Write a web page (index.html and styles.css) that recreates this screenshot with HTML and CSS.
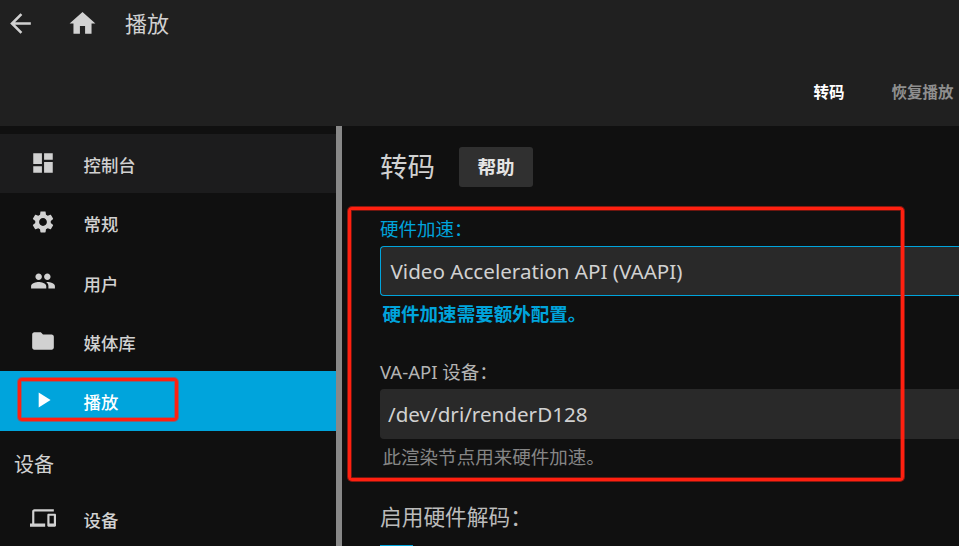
FILE: index.html
```html
<!DOCTYPE html>
<html lang="zh-CN">
<head>
<meta charset="utf-8">
<title>播放</title>
<link rel="stylesheet" href="styles.css">
</head>
<body>
<header class="header">
  <div class="header-top">
    <svg class="icon-top" viewBox="0 0 24 24"><path d="M20 11H7.83l5.59-5.59L12 4l-8 8 8 8 1.41-1.41L7.83 13H20v-2z"/></svg>
    <svg class="icon-top icon-home" viewBox="0 0 24 24"><path d="M10 20v-6h4v6h5v-8h3L12 3 2 12h3v8z"/></svg>
    <h1 class="page-title">播放</h1>
  </div>
  <nav class="tabs"><a class="tab tab-active">转码</a><a class="tab">恢复播放</a></nav>
</header>
<div class="body">
  <aside class="sidebar">
    <a class="nav-item nav-hover"><svg class="nav-icon" viewBox="0 0 24 24"><path d="M3 13h8V3H3v10zm0 8h8v-6H3v6zm10 0h8V11h-8v10zm0-18v6h8V3h-8z"/></svg><span class="nav-text">控制台</span></a>
    <a class="nav-item"><svg class="nav-icon" viewBox="0 0 24 24"><path d="M19.14 12.94c.04-.3.06-.61.06-.94 0-.32-.02-.64-.07-.94l2.03-1.58c.18-.14.23-.41.12-.61l-1.92-3.32c-.12-.22-.37-.29-.59-.22l-2.39.96c-.5-.38-1.03-.7-1.62-.94l-.36-2.54c-.04-.24-.24-.41-.48-.41h-3.84c-.24 0-.43.17-.47.41l-.36 2.54c-.59.24-1.13.57-1.62.94l-2.39-.96c-.22-.08-.47 0-.59.22L2.74 8.87c-.12.21-.08.47.12.61l2.03 1.58c-.05.3-.09.63-.09.94s.02.64.07.94l-2.03 1.58c-.18.14-.23.41-.12.61l1.92 3.32c.12.22.37.29.59.22l2.39-.96c.5.38 1.03.7 1.62.94l.36 2.54c.05.24.24.41.48.41h3.84c.24 0 .44-.17.47-.41l.36-2.54c.59-.24 1.13-.56 1.62-.94l2.39.96c.22.08.47 0 .59-.22l1.92-3.32c.12-.22.07-.47-.12-.61l-2.01-1.58zM12 15.6c-1.98 0-3.6-1.62-3.6-3.6s1.62-3.6 3.6-3.6 3.6 1.62 3.6 3.6-1.62 3.6-3.6 3.6z"/></svg><span class="nav-text">常规</span></a>
    <a class="nav-item"><svg class="nav-icon" viewBox="0 0 24 24"><path d="M16 11c1.66 0 2.99-1.34 2.99-3S17.66 5 16 5s-3 1.34-3 3 1.34 3 3 3zm-8 0c1.66 0 2.99-1.34 2.99-3S9.66 5 8 5 5 6.34 5 8s1.34 3 3 3zm0 2c-2.33 0-7 1.17-7 3.5V19h14v-2.5c0-2.33-4.67-3.5-7-3.5zm8 0c-.29 0-.62.02-.97.05 1.16.84 1.97 1.97 1.97 3.45V19h6v-2.5c0-2.33-4.67-3.5-7-3.5z"/></svg><span class="nav-text">用户</span></a>
    <a class="nav-item"><svg class="nav-icon" viewBox="0 0 24 24"><path d="M10 4H4c-1.1 0-1.99.9-1.99 2L2 18c0 1.100.9 2 2 2h16c1.100 0 2-.9 2-2V8c0-1.100-.9-2-2-2h-8l-2-2z"/></svg><span class="nav-text">媒体库</span></a>
    <a class="nav-item nav-active"><svg class="nav-icon" viewBox="0 0 24 24"><path d="M8 5v14l11-7z"/></svg><span class="nav-text">播放</span><i class="mark mark-nav"></i></a>
    <h3 class="nav-heading">设备</h3>
    <a class="nav-item nav-last"><svg class="nav-icon" viewBox="0 0 24 24"><path d="M4 6h18V4H4c-1.100 0-2 .9-2 2v11H0v3h14v-3H4V6zm19 2h-6c-.55 0-1 .45-1 1v10c0 .55.45 1 1 1h6c.55 0 1-.45 1-1V9c0-.55-.45-1-1-1zm-1 9h-4v-7h4v7z"/></svg><span class="nav-text">设备</span></a>
  </aside>
  <div class="scrollbar"></div>
  <main class="content">
    <div class="section-head"><h2 class="section-title">转码</h2><button class="help">帮助</button></div>
    <div class="marked">
      <div class="label label-focus">硬件加速：</div>
      <div class="field field-focus">Video Acceleration API (VAAPI)</div>
      <div class="desc desc-link">硬件加速需要额外配置。</div>
      <div class="label label-device">VA-API 设备：</div>
      <div class="field field-input">/dev/dri/renderD128</div>
      <div class="desc">此渲染节点用来硬件加速。</div>
      <i class="mark mark-fields"></i>
    </div>
    <h3 class="decode-title">启用硬件解码：</h3>
    <div class="checkbox"></div>
  </main>
</div>
</body>
</html>
```
FILE: styles.css
```css
* { box-sizing: border-box; }
body {
  margin: 0;
  width: 959px;
  height: 546px;
  overflow: hidden;
  background: #101010;
  color: #d1d1d1;
  font-family: "Noto Sans", "Noto Sans CJK SC", sans-serif;
}
h1, h2, h3 { margin: 0; font-weight: 400; }
svg { fill: currentColor; flex: none; }

.header { height: 126px; background: #202020; }
.header-top { height: 46px; padding-left: 5px; display: flex; align-items: center; }
.icon-top { width: 31px; height: 31px; }
.icon-home { margin-left: 31px; }
.page-title { margin-left: 27px; font-size: 22px; line-height: 30px; }
.tabs { display: flex; justify-content: flex-end; gap: 47px; padding: 34px 5.500px 0 0; }
.tab { font-size: 15.500px; line-height: 24px; font-weight: 700; color: #8f8f8f; }
.tab-active { color: #fff; }

.body { display: flex; height: 420px; overflow: hidden; }
.sidebar { width: 336px; padding-top: 8px; flex: none; }
.nav-item {
  position: relative;
  height: 59.300px;
  padding: 5px 0 0 30px;
  display: flex;
  align-items: center;
  gap: 27.500px;
  font-size: 17.400px;
  font-weight: 500;
  line-height: 26px;
}
.nav-icon { width: 26px; height: 26px; margin-top: -7px; }
.nav-text { margin-bottom: 2px; }
.nav-hover { background: #1c1c1d; }
.nav-active { height: 59.800px; padding-top: 3px; background: #00a4dc; color: #fff; }
.nav-active .nav-icon { margin-top: -5px; }
.nav-heading { height: 58.500px; padding: 20px 0 0 14px; font-size: 20px; line-height: 28px; }
.nav-last { height: 56px; padding-top: 7px; }
.nav-last .nav-icon { margin-top: -5px; }
.scrollbar { width: 6px; background: #888; flex: none; }

.content { flex: none; width: 617px; padding: 21px 0 0 38px; }
.section-head { display: flex; align-items: center; height: 40px; }
.section-title { width: 79px; font-size: 27.500px; line-height: 40px; }
.help {
  width: 74px;
  height: 40px;
  padding: 0;
  border: 0;
  border-radius: 3px;
  background: #303030;
  color: #e4e4e4;
  font: 700 18.500px/38px "Noto Sans", "Noto Sans CJK SC", sans-serif;
}
.marked { position: relative; padding-top: 29px; }
.label { height: 30px; font-size: 18.500px; line-height: 28px; color: #b4b4b4; }
.label-focus { color: #00a4dc; line-height: 26px; }
.label-device { height: 32px; margin-top: 29px; line-height: 30px; }
.field {
  height: 50px;
  padding-left: 9.500px;
  border: 1px solid #292929;
  border-right: 0;
  border-radius: 4px 0 0 4px;
  background: #292929;
  font-size: 20.620px;
  line-height: 49px;
}
.field-focus { border-color: #00a4dc; }
.field-input { padding-left: 7px; }
.desc { height: 32px; padding: 4px 0 0 2.500px; font-size: 18.550px; line-height: 28px; color: #868686; }
.desc-link { color: #00a4dc; font-weight: 700; }
.decode-title { margin-top: 31px; font-size: 21.700px; line-height: 30px; color: #bbb; }
.checkbox { width: 33px; height: 1px; margin-top: 13px; background: #00a4dc; }

.mark {
  position: absolute;
  border: 3px solid #ff2010;
  border-radius: 4px;
  box-shadow: 0 0 0 1px rgba(255, 32, 16, .5), inset 0 0 0 1px rgba(255, 32, 16, .4);
}
.mark-nav { left: 18px; top: 7px; width: 160px; height: 43px; }
.mark-fields { left: -32px; top: 20px; width: 556px; height: 274px; }
```
